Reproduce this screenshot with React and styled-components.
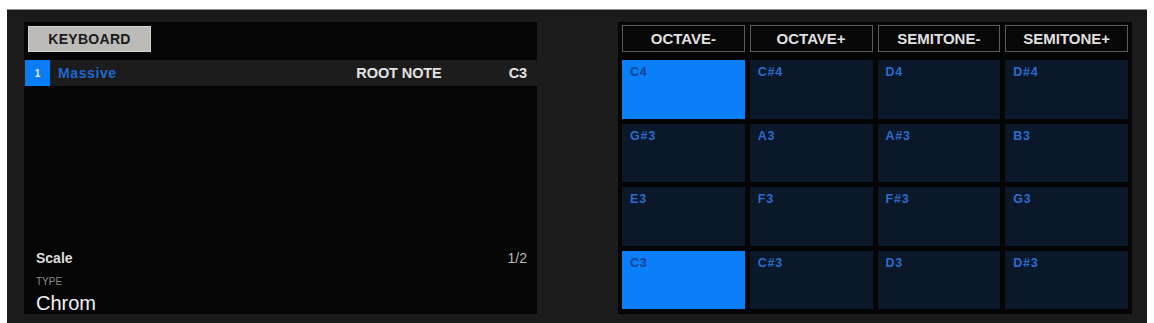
import React from "react";
import styled, { createGlobalStyle } from "styled-components";

const Global = createGlobalStyle`
  html, body { margin: 0; padding: 0; background: #ffffff; }
  body { font-family: "Liberation Sans", Arial, sans-serif; }
`;

const Frame = styled.div`
  margin: 9px 0 0 7px;
  width: 1140px;
  height: 314px;
  box-sizing: border-box;
  background: #1b1b1b;
  border-top: 1px solid #8a8a8a;
  padding: 12px 15px 9px 17px;
  display: flex;
  gap: 81px;
`;

const Display = styled.div`
  width: ${(p) => p.$w}px;
  height: 292px;
  background: #050505;
  box-sizing: border-box;
  display: flex;
  flex-direction: column;
  overflow: hidden;
`;

const ModeButton = styled.div`
  margin: 4px 0 0 4px;
  width: 123px;
  height: 26px;
  box-sizing: border-box;
  background: #bdbbb7;
  border: 1px solid #d6d4d0;
  color: #1a1a1a;
  font-weight: 700;
  font-size: 14px;
  letter-spacing: 0.3px;
  display: flex;
  align-items: center;
  justify-content: center;
`;

const InfoRow = styled.div`
  margin-top: 8px;
  height: 26px;
  background: #1c1c1c;
  display: flex;
  align-items: center;
  padding-right: 10px;
`;

const SlotNum = styled.div`
  width: 25px;
  height: 26px;
  margin-left: 1px;
  background: #0a7cf6;
  color: #e8f0ff;
  font-size: 10px;
  font-weight: 700;
  display: flex;
  align-items: center;
  justify-content: center;
`;

const PluginName = styled.div`
  margin-left: 8px;
  color: #1e68d0;
  font-weight: 700;
  font-size: 14px;
  letter-spacing: 0.6px;
  flex: 1;
`;

const RowLabel = styled.div`
  color: #e2e2e2;
  font-weight: 700;
  font-size: 14.5px;
  letter-spacing: -0.1px;
  margin-right: ${(p) => p.$mr || 0}px;
`;

const Spacer = styled.div`
  flex: 1;
`;

const ParamHead = styled.div`
  display: flex;
  justify-content: space-between;
  align-items: center;
  padding: 0 10px 0 12px;
  line-height: 16px;
`;

const ParamName = styled.div`
  color: #dcdcdc;
  font-weight: 700;
  font-size: 14px;
`;

const PageNum = styled.div`
  color: #b8b8b8;
  font-size: 14px;
`;

const ParamType = styled.div`
  padding-left: 12px;
  margin-top: 10px;
  color: #8c8c8c;
  font-size: 10px;
  line-height: 12px;
`;

const ParamValue = styled.div`
  padding-left: 12px;
  margin-top: 5px;
  color: #f0f0f0;
  font-size: 20px;
  line-height: 21px;
`;

const PadArea = styled.div`
  height: 100%;
  box-sizing: border-box;
  padding: 3px 4px 5px 4px;
  display: flex;
  flex-direction: column;
`;

const HeaderRow = styled.div`
  display: grid;
  grid-template-columns: repeat(4, 1fr);
  gap: 5px;
  height: 27px;
  margin-bottom: 8px;
`;

const HeaderButton = styled.div`
  box-sizing: border-box;
  border: 1px solid #5a5a5a;
  background: #070707;
  color: #e0e0e0;
  font-weight: 700;
  font-size: 15px;
  display: flex;
  align-items: center;
  justify-content: center;
`;

const PadGrid = styled.div`
  flex: 1;
  display: grid;
  grid-template-columns: repeat(4, 1fr);
  grid-template-rows: repeat(4, 1fr);
  gap: 5px;
`;

const Pad = styled.div`
  background: ${(p) => (p.$on ? "#0a7ff8" : "#0b1829")};
  color: ${(p) => (p.$on ? "#0c3f8c" : "#2c6ccf")};
  font-weight: 700;
  font-size: 12.5px;
  letter-spacing: 0.8px;
  padding: 5px 8px;
`;

const pads = [
  "C4", "C#4", "D4", "D#4",
  "G#3", "A3", "A#3", "B3",
  "E3", "F3", "F#3", "G3",
  "C3", "C#3", "D3", "D#3",
];
const active = new Set(["C4", "C3"]);

export default function App() {
  return (
    <>
      <Global />
      <Frame>
        <Display $w={513}>
          <ModeButton>KEYBOARD</ModeButton>
          <InfoRow>
            <SlotNum>1</SlotNum>
            <PluginName>Massive</PluginName>
            <RowLabel $mr={67}>ROOT NOTE</RowLabel>
            <RowLabel>C3</RowLabel>
          </InfoRow>
          <Spacer />
          <ParamHead>
            <ParamName>Scale</ParamName>
            <PageNum>1/2</PageNum>
          </ParamHead>
          <ParamType>TYPE</ParamType>
          <ParamValue>Chrom</ParamValue>
        </Display>
        <Display $w={514}>
          <PadArea>
            <HeaderRow>
              {["OCTAVE-", "OCTAVE+", "SEMITONE-", "SEMITONE+"].map((t) => (
                <HeaderButton key={t}>{t}</HeaderButton>
              ))}
            </HeaderRow>
            <PadGrid>
              {pads.map((n) => (
                <Pad key={n} $on={active.has(n)}>
                  {n}
                </Pad>
              ))}
            </PadGrid>
          </PadArea>
        </Display>
      </Frame>
    </>
  );
}
